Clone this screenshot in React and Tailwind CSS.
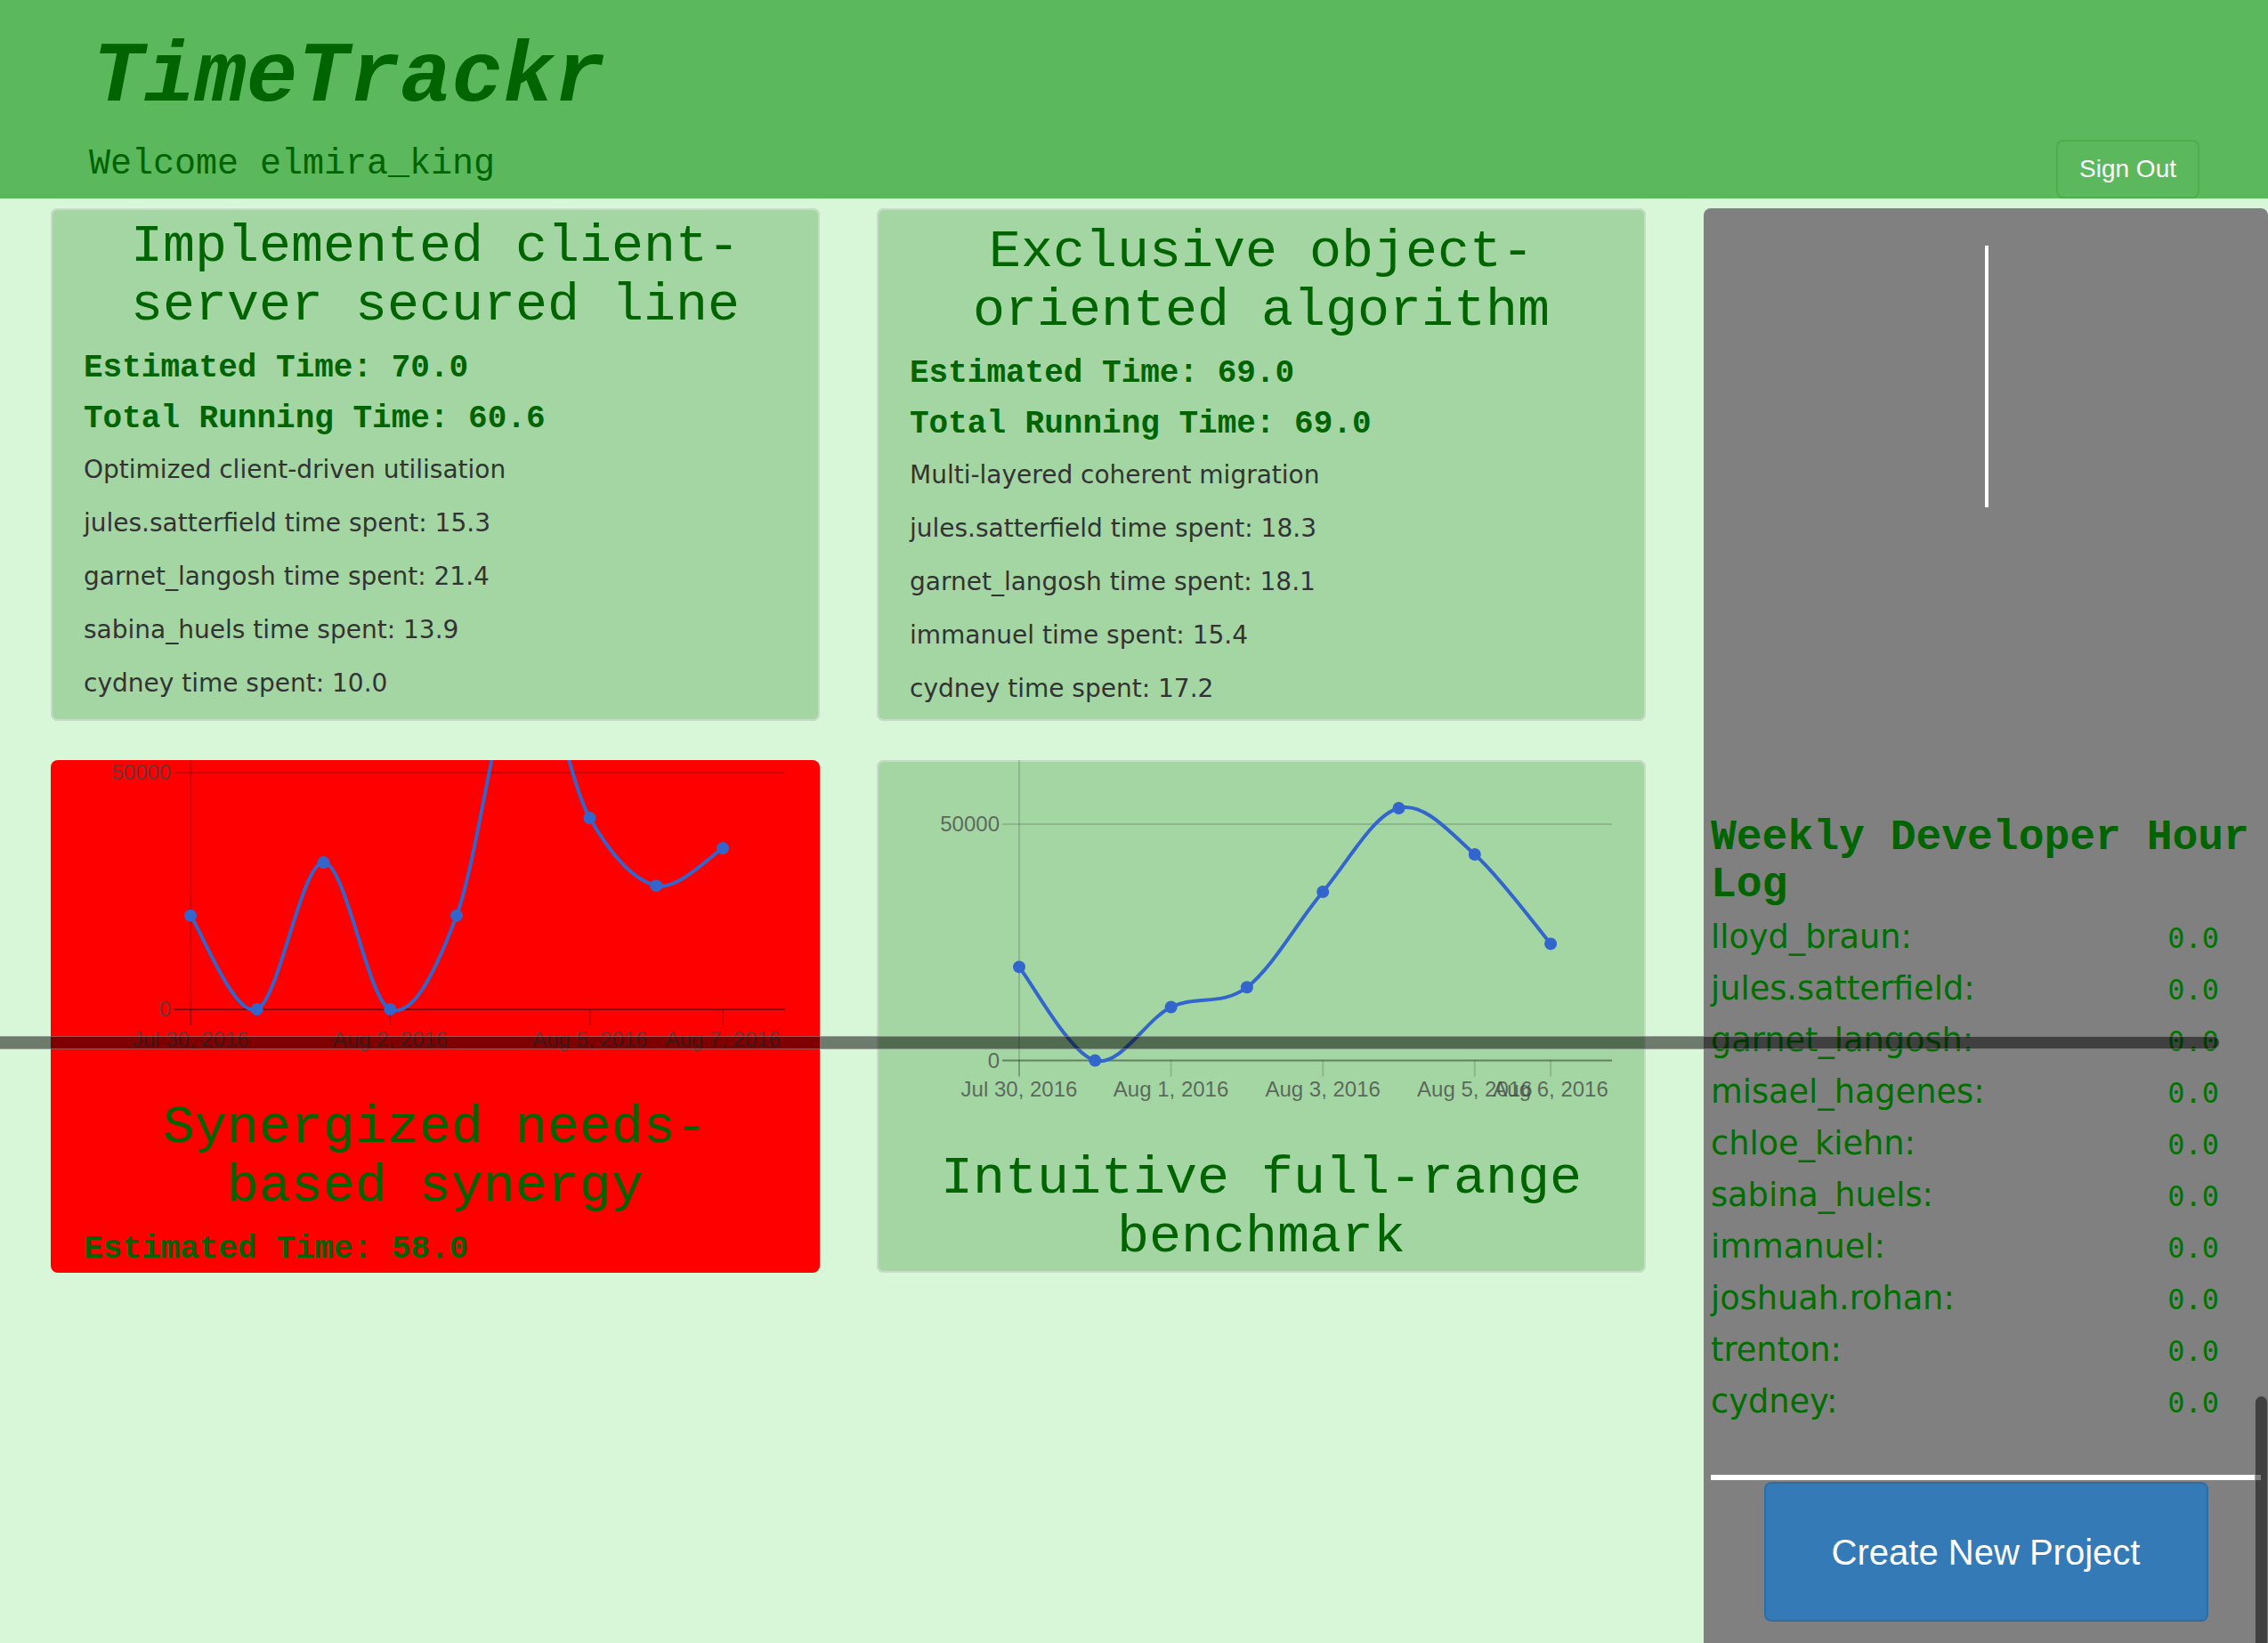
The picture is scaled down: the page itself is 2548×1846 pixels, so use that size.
import React from "react";

const MONO = "font-['Liberation_Mono','Courier_New',monospace]";
const SANS = "font-['Liberation_Sans',Arial,sans-serif]";
const VERDANA = "font-['DejaVu_Sans',Verdana,sans-serif]";

const projects = [
  {
    title: ["Implemented client-", "server secured line"],
    est: "70.0",
    total: "60.6",
    desc: "Optimized client-driven utilisation",
    devs: [
      ["jules.satterfield", "15.3"],
      ["garnet_langosh", "21.4"],
      ["sabina_huels", "13.9"],
      ["cydney", "10.0"],
    ],
  },
  {
    title: ["Exclusive object-", "oriented algorithm"],
    est: "69.0",
    total: "69.0",
    desc: "Multi-layered coherent migration",
    devs: [
      ["jules.satterfield", "18.3"],
      ["garnet_langosh", "18.1"],
      ["immanuel", "15.4"],
      ["cydney", "17.2"],
    ],
  },
];

const redChart = {
  values: [19800, 0, 31000, 0, 19800, 75000, 40400, 26100, 34000],
  x0: 157,
  step: 74.75,
  y0: 280,
  y50: 14,
  right: 825,
  labelY: 322,
  height: 362,
  labels: [
    [0, "Jul 30, 2016"],
    [3, "Aug 2, 2016"],
    [6, "Aug 5, 2016"],
    [8, "Aug 7, 2016"],
  ],
  grid: "rgba(0,0,0,0.2)",
  base: "rgba(0,0,0,0.5)",
};

const greenChart = {
  values: [19800, 0, 11300, 15500, 35700, 53400, 43600, 24700],
  x0: 160,
  step: 85.3,
  y0: 337.6,
  y50: 72,
  right: 826,
  labelY: 378,
  height: 419,
  labels: [
    [0, "Jul 30, 2016"],
    [2, "Aug 1, 2016"],
    [4, "Aug 3, 2016"],
    [6, "Aug 5, 2016"],
    [7, "Aug 6, 2016"],
  ],
  grid: "rgba(0,0,0,0.14)",
  base: "rgba(0,0,0,0.4)",
};

const weekly = [
  "lloyd_braun",
  "jules.satterfield",
  "garnet_langosh",
  "misael_hagenes",
  "chloe_kiehn",
  "sabina_huels",
  "immanuel",
  "joshuah.rohan",
  "trenton",
  "cydney",
];

// catmull-rom -> bezier, close to google charts' curveType "function"
function smooth(pts) {
  let d = `M${pts[0][0]} ${pts[0][1]}`;
  for (let i = 0; i < pts.length - 1; i++) {
    const p0 = pts[i - 1] || pts[i];
    const p1 = pts[i];
    const p2 = pts[i + 1];
    const p3 = pts[i + 2] || p2;
    const c1x = p1[0] + (p2[0] - p0[0]) / 6;
    const c1y = p1[1] + (p2[1] - p0[1]) / 6;
    const c2x = p2[0] - (p3[0] - p1[0]) / 6;
    const c2y = p2[1] - (p3[1] - p1[1]) / 6;
    d += ` C${c1x} ${c1y} ${c2x} ${c2y} ${p2[0]} ${p2[1]}`;
  }
  return d;
}

function Chart({ c }) {
  const scale = (c.y0 - c.y50) / 50000;
  const pts = c.values.map((v, i) => [c.x0 + i * c.step, c.y0 - v * scale]);
  const font = "Liberation Sans, Arial, sans-serif";
  return (
    <svg width="864" height={c.height} className="block shrink-0">
      <line x1={c.x0 - 19} y1={c.y50} x2={c.right} y2={c.y50} stroke={c.grid} strokeWidth="2" />
      <line x1={c.x0} y1="0" x2={c.x0} y2={c.y0 + 18} stroke={c.grid} strokeWidth="2" />
      {c.labels.map(([i, t]) => (
        <g key={t}>
          <line
            x1={c.x0 + i * c.step}
            y1={c.y0}
            x2={c.x0 + i * c.step}
            y2={c.y0 + 18}
            stroke={c.grid}
            strokeWidth="2"
          />
          <text
            x={c.x0 + i * c.step}
            y={c.labelY}
            textAnchor="middle"
            fontFamily={font}
            fontSize="24"
            fill="#444"
            fillOpacity="0.75"
          >
            {t}
          </text>
        </g>
      ))}
      <line x1={c.x0 - 19} y1={c.y0} x2={c.right} y2={c.y0} stroke={c.base} strokeWidth="2" />
      <text x={c.x0 - 22} y={c.y50 + 8} textAnchor="end" fontFamily={font} fontSize="24" fill="#444" fillOpacity="0.75">
        50000
      </text>
      <text x={c.x0 - 22} y={c.y0 + 8} textAnchor="end" fontFamily={font} fontSize="24" fill="#444" fillOpacity="0.75">
        0
      </text>
      <path d={smooth(pts)} fill="none" stroke="#3366cc" strokeWidth="4" />
      {pts.map(([x, y], i) => (
        <circle key={i} cx={x} cy={y} r="7" fill="#3366cc" />
      ))}
    </svg>
  );
}

function Title({ lines }) {
  return (
    <h2 className={`${MONO} text-[60px] leading-[66px] text-center text-[#006400] font-normal`}>
      {lines[0]}
      <br />
      {lines[1]}
    </h2>
  );
}

function InfoCard({ p, offset }) {
  return (
    <div
      className={`h-[576px] overflow-hidden rounded-[8px] bg-[#a3d6a3] ring-2 ring-inset ring-[#c6dcc6] px-[37px] ${offset}`}
    >
      <Title lines={p.title} />
      <h4 className={`${MONO} mt-[18px] text-[36px] leading-[40px] font-bold text-[#006400]`}>
        Estimated Time: {p.est}
      </h4>
      <h4 className={`${MONO} mt-[17px] mb-[17px] text-[36px] leading-[40px] font-bold text-[#006400]`}>
        Total Running Time: {p.total}
      </h4>
      <div className={`${VERDANA} text-[28px] leading-[40px] text-[#333] flex flex-col gap-[20px]`}>
        <p>{p.desc}</p>
        {p.devs.map(([n, t]) => (
          <p key={n}>
            {n} time spent: {t}
          </p>
        ))}
      </div>
    </div>
  );
}

export default function App() {
  return (
    <div className="relative w-full h-[1846px] overflow-hidden bg-[#d8f6d8]">
      <header className="h-[223px] bg-[#5cb85c] flex items-end justify-between pr-[77px]">
        <div className="self-start pt-[35px] pl-[100px]">
          <h1 className={`${MONO} ml-[4px] text-[96px] leading-[106px] font-bold italic text-[#006400]`}>
            TimeTrackr
          </h1>
          <p className={`${MONO} mt-[22px] text-[40px] leading-[44px] text-[#006400]`}>Welcome elmira_king</p>
        </div>
        <button
          className={`${SANS} border-2 border-[#4cae4c] rounded-[8px] px-[24px] py-[11px] text-[28px] leading-[40px] text-white bg-[#5cb85c]`}
        >
          Sign Out
        </button>
      </header>

      <div className="mt-[11px] flex items-start">
        <div className="pl-[57px] grid grid-cols-[864px_864px] gap-x-[64px] gap-y-[44px]">
          <InfoCard p={projects[0]} offset="pt-[10px]" />
          <InfoCard p={projects[1]} offset="pt-[16px]" />

          <div className="h-[576px] overflow-hidden rounded-[8px] bg-[#ff0000]">
            <Chart c={redChart} />
            <div className="mt-[18px]">
              <Title lines={["Synergized needs-", "based synergy"]} />
            </div>
            <h4 className={`${MONO} mt-[18px] px-[37px] text-[36px] leading-[40px] font-bold text-[#006400]`}>
              Estimated Time: 58.0
            </h4>
          </div>

          <div className="h-[576px] overflow-hidden rounded-[8px] bg-[#a3d6a3] ring-2 ring-inset ring-[#c6dcc6]">
            <Chart c={greenChart} />
            <div className="mt-[18px]">
              <Title lines={["Intuitive full-range", "benchmark"]} />
            </div>
          </div>
        </div>

        <aside className="relative ml-[65px] flex-1 min-h-[1612px] bg-[#808080] rounded-t-[8px] flex flex-col">
          <div className="h-[681px] pt-[42px]">
            <div className="ml-[316px] w-[4px] h-[294px] bg-white" />
          </div>
          <h3 className={`${MONO} pl-[8px] text-[48px] leading-[53px] font-bold text-[#006400]`}>
            Weekly Developer Hour Log
          </h3>
          <ul className="mt-[3px]">
            {weekly.map((n) => (
              <li key={n} className="h-[58px] flex items-baseline justify-between pl-[8px] pr-[55px]">
                <span className={`${VERDANA} text-[36.7px] leading-[58px] text-[#006e00]`}>{n}:</span>
                <span className="font-['DejaVu_Sans_Mono',monospace] text-[32px] leading-[58px] text-[#007400]">
                  0.0
                </span>
              </li>
            ))}
          </ul>
          <div className="mt-[53px] mx-[8px] h-[6px] bg-white" />
          <button
            className={`${SANS} mt-[2px] mx-auto w-[499px] h-[157px] rounded-[8px] bg-[#337ab7] border-2 border-[#2e6da4] text-white text-[40px]`}
          >
            Create New Project
          </button>
          <div className="absolute right-0 top-[1334px] w-[15px] h-[400px] rounded-full bg-black/50 border border-white/30" />
        </aside>
      </div>

      <div className="absolute left-[-20px] top-[1164px] w-[2514px] h-[15px] rounded-full bg-black/50 border border-white/30" />
    </div>
  );
}
